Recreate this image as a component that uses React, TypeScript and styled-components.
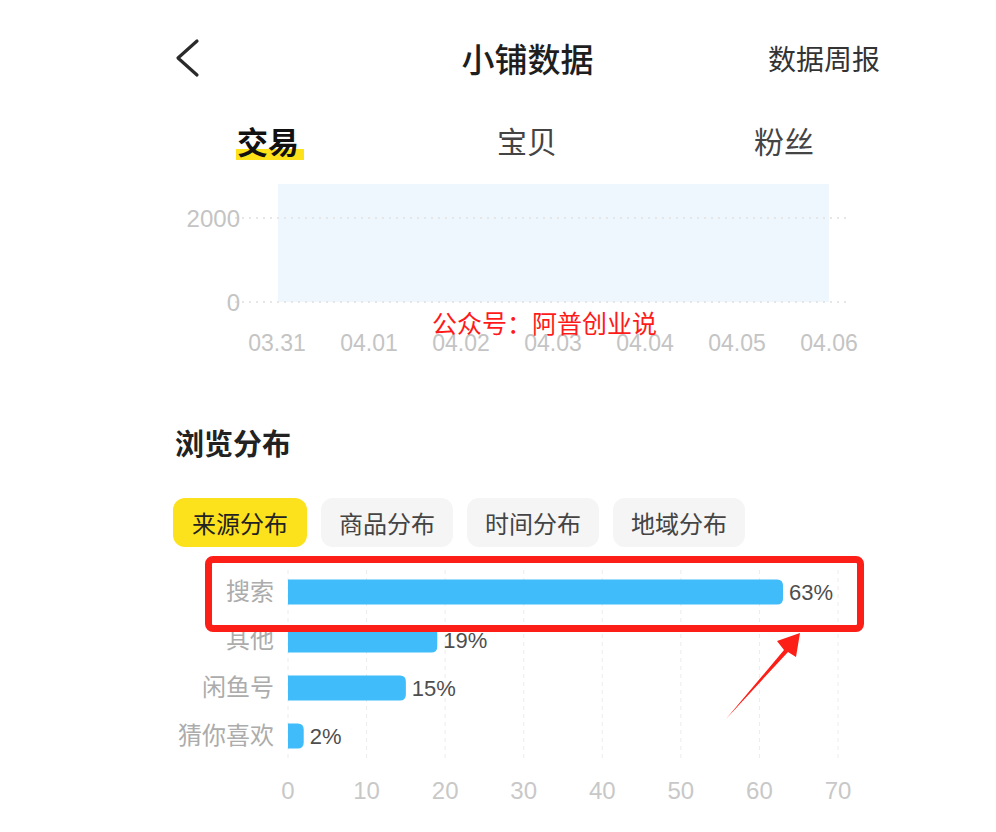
import styled, { createGlobalStyle } from "styled-components";

const Global = createGlobalStyle`
  body {
    margin: 0;
    background: #fff;
    font-family: "Noto Sans CJK SC", "Liberation Sans", sans-serif;
  }
`;

const Page = styled.div`
  position: relative;
  width: 996px;
  height: 832px;
  overflow: hidden;
  background: #fff;
`;

const Column = styled.div`
  width: 705px;
  margin-left: 175px;
  padding-top: 28px;
`;

const Header = styled.header`
  display: grid;
  grid-template-columns: 1fr auto 1fr;
  align-items: center;
  height: 60px;
`;

const Back = styled.svg`
  display: block;
`;

const Title = styled.h1`
  margin: 0;
  font-size: 33px;
  font-weight: 500;
  color: #1e1e1e;
  line-height: 1;
`;

const Weekly = styled.span`
  justify-self: end;
  font-size: 28px;
  color: #333;
  line-height: 1;
`;

const Tabs = styled.nav`
  display: grid;
  grid-template-columns: 260px 257px 1fr;
  align-items: center;
  height: 50px;
  margin-top: 27px;
  padding-left: 62px;
`;

const Tab = styled.span<{ $active?: boolean }>`
  position: relative;
  justify-self: start;
  font-size: ${(p) => (p.$active ? 31 : 30)}px;
  line-height: 1;
  font-weight: ${(p) => (p.$active ? 700 : 400)};
  color: ${(p) => (p.$active ? "#111" : "#444")};
  z-index: 0;

  &::after {
    content: "";
    display: ${(p) => (p.$active ? "block" : "none")};
    position: absolute;
    left: -1px;
    right: -5px;
    bottom: -4px;
    height: 11px;
    background: #fde21a;
    z-index: -1;
  }
`;

const Chart = styled.svg`
  display: block;
  margin-top: 10px;
  font-family: "Liberation Sans", sans-serif;
`;

const SectionTitle = styled.h2`
  margin: 57px 0 0;
  font-size: 29px;
  line-height: 40px;
  font-weight: 700;
  color: #222;
`;

const Chips = styled.div`
  display: flex;
  gap: 14px;
  margin-top: 36px;
  margin-left: -2px;
`;

const Chip = styled.button<{ $active?: boolean }>`
  height: 49px;
  padding: 0 ${(p) => (p.$active ? 19 : 18)}px;
  border: none;
  border-radius: 12px;
  font-family: inherit;
  font-size: 24px;
  color: ${(p) => (p.$active ? "#222" : "#444")};
  background: ${(p) => (p.$active ? "#fce21c" : "#f5f5f5")};
`;

const Watermark = styled.div`
  position: absolute;
  left: 432px;
  top: 307px;
  font-size: 25px;
  line-height: 30px;
  color: #ff1a1a;
  white-space: nowrap;
`;

const Highlight = styled.div`
  position: absolute;
  left: 205px;
  top: 556px;
  width: 659px;
  height: 76px;
  box-sizing: border-box;
  border: 7px solid #fb1f17;
  border-radius: 8px;
`;

const Arrow = styled.svg`
  position: absolute;
  left: 0;
  top: 0;
`;

const dates = ["03.31", "04.01", "04.02", "04.03", "04.04", "04.05", "04.06"];

const rows = [
  { label: "搜索", value: 63 },
  { label: "其他", value: 19 },
  { label: "闲鱼号", value: 15 },
  { label: "猜你喜欢", value: 2 },
];

const X0 = 113;
const UNIT = 550 / 70;

function TrendChart() {
  return (
    <Chart width={705} height={190}>
      <rect x={103} y={9} width={551} height={118} fill="#eef7fd" />
      {[43, 127].map((y) => (
        <line key={y} x1={53} x2={675} y1={y} y2={y} stroke="#e6e6e6" strokeWidth={2} strokeDasharray="2 5" />
      ))}
      <text x={65} y={52} textAnchor="end" fontSize={24} fill="#c4c4c4">2000</text>
      <text x={65} y={136} textAnchor="end" fontSize={24} fill="#c4c4c4">0</text>
      {dates.map((d, i) => (
        <text key={d} x={102 + 92 * i} y={176} textAnchor="middle" fontSize={23} fill="#c4c4c4">
          {d}
        </text>
      ))}
    </Chart>
  );
}

function SourceChart() {
  return (
    <Chart width={705} height={260} style={{ marginTop: 13 }}>
      {Array.from({ length: 8 }, (_, i) => (
        <line
          key={i}
          x1={X0 + i * 10 * UNIT}
          x2={X0 + i * 10 * UNIT}
          y1={10}
          y2={202}
          stroke="#ececec"
          strokeWidth={1}
          strokeDasharray="4 4"
        />
      ))}
      {rows.map((r, i) => {
        const cy = 32 + i * 48;
        const w = r.value * UNIT;
        return (
          <g key={r.label}>
            <text
              x={99}
              y={cy + 8}
              textAnchor="end"
              fontSize={24}
              fill="#acacac"
              fontFamily="Noto Sans CJK SC, sans-serif"
            >
              {r.label}
            </text>
            <path
              d={`M${X0} ${cy - 12.5} H${X0 + w - 6} Q${X0 + w} ${cy - 12.5} ${X0 + w} ${cy - 6.5} V${cy + 6.5} Q${X0 + w} ${cy + 12.5} ${X0 + w - 6} ${cy + 12.5} H${X0} Z`}
              fill="#3fbcf9"
            />
            <text x={X0 + w + 6} y={cy + 8} fontSize={22} fill="#4e4e4e">
              {r.value}%
            </text>
          </g>
        );
      })}
      {Array.from({ length: 8 }, (_, i) => (
        <text key={i} x={X0 + i * 10 * UNIT} y={239} textAnchor="middle" fontSize={24} fill="#c8c8c8">
          {i * 10}
        </text>
      ))}
    </Chart>
  );
}

export default function App() {
  return (
    <Page>
      <Global />
      <Column>
        <Header>
          <Back width={26} height={40} viewBox="0 0 26 40">
            <polyline points="22,3 3,20 22,37" fill="none" stroke="#2a2a2a" strokeWidth={3.2} strokeLinecap="round" strokeLinejoin="round" />
          </Back>
          <Title>小铺数据</Title>
          <Weekly>数据周报</Weekly>
        </Header>
        <Tabs>
          <Tab $active>交易</Tab>
          <Tab>宝贝</Tab>
          <Tab>粉丝</Tab>
        </Tabs>
        <TrendChart />
        <SectionTitle>浏览分布</SectionTitle>
        <Chips>
          <Chip $active>来源分布</Chip>
          <Chip>商品分布</Chip>
          <Chip>时间分布</Chip>
          <Chip>地域分布</Chip>
        </Chips>
        <SourceChart />
      </Column>
      <Watermark>公众号：阿普创业说</Watermark>
      <Highlight />
      <Arrow width={996} height={832}>
        <polygon points="726,719 784,650 777,641 800,633 796,657 788,652" fill="#fb1f17" />
      </Arrow>
    </Page>
  );
}
